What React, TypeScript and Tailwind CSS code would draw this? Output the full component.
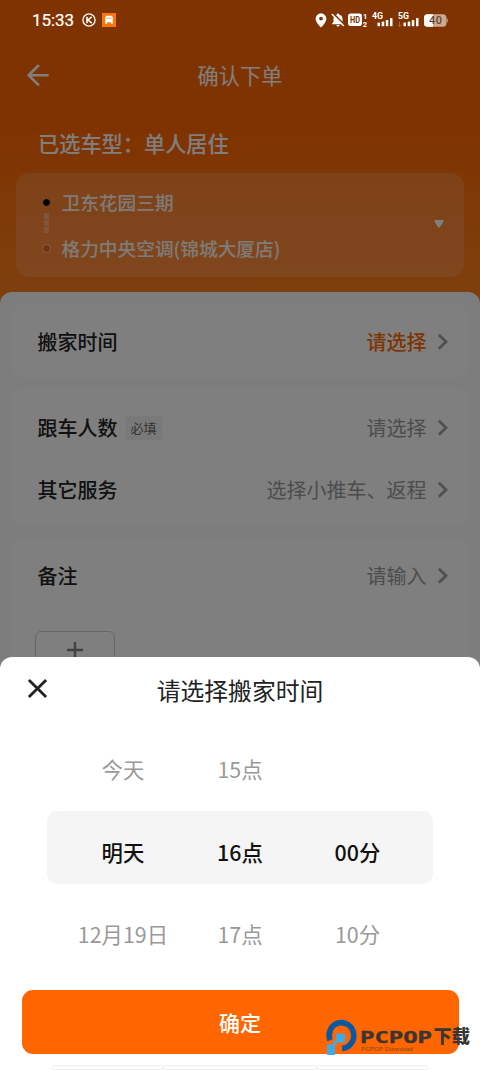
import type { ReactNode } from "react";

const days = ["今天", "明天", "12月19日"];
const hours = ["15点", "16点", "17点"];
const minutes = ["", "00分", "10分"];

function Chevron() {
  return (
    <svg width="12" height="18" viewBox="0 0 12 18" fill="none" className="text-[#a0a0a0]">
      <path d="M1.8 1.8 9 8.8 1.8 15.8" stroke="currentColor" strokeWidth="2.8" />
    </svg>
  );
}

function Signal({ label, dim }: { label: string; dim?: boolean }) {
  return (
    <svg width="22" height="20" viewBox="0 -4 22 20" fill="white" className="-mt-1 font-['Roboto']">
      <text x="0" y="6.6" fontSize="8.5" fontWeight="700" textLength="11" lengthAdjust="spacingAndGlyphs">
        {label}
      </text>
      {dim && <path d="M1.5 9.5v5M0 12.5l1.5 2 1.5-2" stroke="#a96a3e" fill="none" />}
      <rect x="5.5" y="10.6" width="2.5" height="3.6" />
      <rect x="9.7" y="9.6" width="2.5" height="4.6" />
      <rect x="13.8" y="8.1" width="2.5" height="6.1" />
      <rect x="18" y="6.1" width="2.5" height="8.1" />
    </svg>
  );
}

function StatusBar() {
  return (
    <div className="relative z-20 flex h-10 items-center justify-between pl-8 pr-[32px] text-white">
      <div className="flex items-center">
        <span className="w-[42px] font-['Roboto'] text-[17px] leading-5 tracking-[-0.1px] [-webkit-text-stroke:0.2px_white]">15:33</span>
        <svg width="14" height="14" viewBox="0 0 14 14" fill="none" stroke="white" className="ml-[8px]">
          <circle cx="7" cy="7" r="6.1" strokeWidth="1.3" />
          <path d="M5 3.8v6.4M9.6 3.9 6 7l3.8 3.2" strokeWidth="1.6" />
        </svg>
        <svg width="14" height="14" viewBox="0 0 14 14" className="ml-[6px]">
          <rect width="14" height="14" fill="#f5760d" />
          <path d="M4 2.8h6l1.3 3.4H2.7zM3.3 6h7.4v5H8.9V9.3H5.1V11H3.3z" fill="white" />
          <path d="M4.2 5.2h5.6" stroke="#f5a563" />
        </svg>
      </div>
      <div className="flex items-center font-['Roboto']">
        <svg width="12" height="15" viewBox="0 0 12 15" fill="white">
          <path fillRule="evenodd" d="M6 .3A5.4 5.4 0 0 0 .6 5.7C.6 9.4 6 14.5 6 14.5s5.4-5.1 5.4-8.8A5.4 5.4 0 0 0 6 .3zm0 3.4a1.9 1.9 0 1 1 0 3.8 1.9 1.9 0 0 1 0-3.8z" />
        </svg>
        <svg width="14" height="14" viewBox="0 0 14 14" className="ml-[4px]">
          <path d="M7 .5c.8 0 1.2.5 1.2 1.2C10.4 2.2 11.5 4 11.5 6v2.8l1.3 1.6v.8H1.2v-.8l1.3-1.6V6c0-2 1.1-3.8 3.3-4.3C5.8 1 6.2.5 7 .5zM5.5 12h3a1.5 1.5 0 0 1-3 0z" fill="white" />
          <path d="m1.9.1 12 12" stroke="#803300" strokeWidth="1.6" />
          <path d="m.8.9 12 12" stroke="white" strokeWidth="1.4" />
        </svg>
        <svg width="20" height="20" viewBox="0 -2 20 20" className="ml-[3px]">
          <rect x="0" y="1.5" width="14" height="12.5" rx="2.8" fill="white" />
          <text x="2" y="10.9" fontSize="8.5" fontWeight="700" fill="#803300" textLength="10" lengthAdjust="spacingAndGlyphs">HD</text>
          <text x="15" y="7" fontSize="7.5" fontWeight="700" fill="white">1</text>
          <text x="14.7" y="15" fontSize="7.5" fontWeight="700" fill="white">2</text>
        </svg>
        <div className="ml-1">
          <Signal label="4G" />
        </div>
        <div className="ml-[4px]">
          <Signal label="5G" dim />
        </div>
        <svg width="24" height="13" viewBox="0 0 24 13" className="ml-[4px]">
          <rect x="0" y="0.3" width="22.4" height="12.4" rx="3.5" fill="#cda990" />
          <path d="M3.5.3H9v12.4H3.5A3.5 3.5 0 0 1 0 9.2V3.8A3.5 3.5 0 0 1 3.5.3z" fill="white" />
          <path d="M22.6 4c1.6.8 1.6 4.2 0 5z" fill="#cda990" />
          <text x="5" y="10.3" fontSize="10.8" fontWeight="500" fill="#5a4636" textLength="13">40</text>
        </svg>
      </div>
    </div>
  );
}

function Row({ label, value, tag, active }: { label: string; value: string; tag?: string; active?: boolean }) {
  return (
    <div className="flex items-center justify-between pl-[26.5px] pr-[20.5px]">
      <div className="flex items-center">
        <span className="text-[20px] font-medium leading-7 text-[#222]">{label}</span>
        {tag && (
          <span className="ml-[8px] flex h-6 w-9 items-center justify-center rounded bg-[#f2f2f2] text-[13px] text-[#666]">{tag}</span>
        )}
      </div>
      <div className="flex items-center gap-[10px]">
        <span className={active ? "text-[20px] font-medium leading-7 text-[#ff6600]" : "text-[20px] leading-7 text-[#999]"}>{value}</span>
        <Chevron />
      </div>
    </div>
  );
}

function Card({ className, children }: { className: string; children: ReactNode }) {
  return <div className={`mx-[11px] rounded-[14px] bg-white ${className}`}>{children}</div>;
}

function PickerColumn({ items, className }: { items: string[]; className: string }) {
  return (
    <div className={`flex flex-col items-center pt-[2px] ${className}`}>
      {items.map((item, i) => (
        <span
          key={i}
          className={`flex h-[82.5px] items-center text-[21.4px] ${i === 1 ? "font-medium text-[#111]" : "text-[#999]"}`}
        >
          {item}
        </span>
      ))}
    </div>
  );
}

function Watermark() {
  return (
    <svg width="150" height="40" viewBox="0 0 150 40" className="absolute left-[324px] top-[1018px]">
      <path d="M6 22.2A12.3 12.9 0 1 1 18 30.4" fill="none" stroke="#0b57a0" strokeWidth="5.6" />
      <rect x="12" y="15.5" width="9" height="9" fill="#3fa9ea" />
      <path d="M3 26.5h6V23h3.5v3.5H11V37H3z" fill="#3fa9ea" />
      <text x="36" y="25.4" fontSize="16.5" fontWeight="700" fill="#3b3531" stroke="#3b3531" strokeWidth=".4" textLength="72" lengthAdjust="spacingAndGlyphs" className="font-['DejaVu_Sans_Mono']">
        PCPOP
      </text>
      <text x="109.5" y="25.4" fontSize="18" fontWeight="900" fill="#3b3531" textLength="36.5" lengthAdjust="spacingAndGlyphs">
        下载
      </text>
      <text x="37" y="32.6" fontSize="5" fill="#7a4a25" textLength="52" lengthAdjust="spacingAndGlyphs" className="font-['Liberation_Sans']">
        PCPOP Download
      </text>
    </svg>
  );
}

export default function App() {
  return (
    <div className="relative h-[1070px] w-[480px] overflow-hidden bg-[#f8f8f8] font-['Noto_Sans_CJK_SC',sans-serif]">
      <div className="h-[310px] bg-linear-to-b from-[#ff6600] from-40% to-[#ff8020]">
        <StatusBar />
        <div className="flex h-[69px] items-center px-[26px]">
          <svg width="24" height="24" viewBox="0 0 24 24" fill="none" stroke="white" strokeWidth="2.6" strokeLinecap="round" strokeLinejoin="round">
            <path d="M12.2 2.8 2.6 12.2l9.6 9.4M2.8 12.2h18.8" />
          </svg>
          <h1 className="flex-1 pr-[24px] text-center text-[21.2px] leading-7 text-white">确认下单</h1>
        </div>
        <p className="mt-[19px] pl-[38px] text-[21.2px] font-medium leading-[30px] text-white">已选车型：单人居住</p>
        <div className="mx-4 mt-[15px] flex h-[104px] items-center rounded-[14px] bg-white/15 pl-[26px] pr-[20px]">
          <div className="flex h-[60px] w-[9px] flex-col items-center">
            <span className="mt-[3px] size-[9px] rounded-full border border-[#ff9d5c] bg-black" />
            <div className="mt-[6px] flex flex-col items-center gap-px">
              <span className="h-[6px] w-[5px] bg-white/30" />
              <span className="h-[6px] w-[5px] bg-white/30" />
              <span className="h-[6px] w-[5px] bg-white/30" />
            </div>
            <span className="mt-[11px] size-[9px] rounded-full border-[1.5px] border-[#ffc8a4] bg-[#e8641a]" />
          </div>
          <div className="ml-[10.5px] flex flex-1 flex-col gap-[18px] text-[18.7px] font-medium leading-7 text-white/95">
            <span>卫东花园三期</span>
            <span>格力中央空调(锦城大厦店)</span>
          </div>
          <svg width="10" height="10" viewBox="0 0 10 10" fill="white">
            <path d="M1.2 0h7.6q1.2.3.6 1.7L6 7q-1 1.4-2 0L.6 1.7Q0 .3 1.2 0z" />
          </svg>
        </div>
      </div>

      <div className="relative -mt-[18px] h-[780px] rounded-t-xl bg-[#fbfbfb] pt-[12px]">
        <Card className="h-[74px] pt-[24px]">
          <Row label="搬家时间" value="请选择" active />
        </Card>
        <Card className="mt-[10px] flex h-[138px] flex-col gap-[34px] pt-[26px]">
          <Row label="跟车人数" value="请选择" tag="必填" />
          <Row label="其它服务" value="选择小推车、返程" />
        </Card>
        <Card className="mt-[12px] h-[300px] pt-[24px]">
          <Row label="备注" value="请输入" />
          <div className="ml-[27px] mr-[20px] mt-[22px] border-t border-[#fafafa]" />
          <div className="ml-[24px] mt-[18px] flex h-[80px] w-[80px] justify-center rounded-md border border-[#ccc] pt-[10px]">
            <svg width="16" height="16" viewBox="0 0 16 16" stroke="#808080" strokeWidth="2.4">
              <path d="M8 0v16M0 8h16" />
            </svg>
          </div>
        </Card>
      </div>

      <div className="absolute inset-0 z-10 bg-black/50" />

      <div className="absolute inset-x-0 bottom-0 z-30 flex h-[413px] flex-col rounded-t-xl bg-white">
        <div className="flex h-[65px] items-center px-[27px]">
          <svg width="21" height="21" viewBox="0 0 21 21" stroke="#222" strokeWidth="2.8" className="mb-[3px]">
            <path d="m1.9 1.9 17.2 17.2M19.1 1.9 1.9 19.1" />
          </svg>
          <h2 className="flex-1 pr-[21px] text-center text-[23.8px] leading-8 text-[#222]">请选择搬家时间</h2>
        </div>
        <div className="mt-[4px] grid h-[249px] grid-cols-1">
          <div className="col-start-1 row-start-1 mx-[47px] mb-[6px] h-[73px] self-center rounded-[10px] bg-[#f5f5f5]" />
          <div className="relative col-start-1 row-start-1 flex pl-[64.5px]">
            <PickerColumn items={days} className="w-[117px]" />
            <PickerColumn items={hours} className="w-[117px]" />
            <PickerColumn items={minutes} className="w-[118px]" />
          </div>
        </div>
        <button className="mx-[21.5px] mt-[15px] h-[64px] shrink-0 rounded-[11px] bg-[#ff6600] pt-[1px] text-[21px] font-medium text-white">确定</button>
        <div className="ml-[52px] mt-[11px] flex">
          <span className="h-[5px] w-[111px] rounded-sm border border-[#eee]" />
          <span className="h-[5px] w-[154px] rounded-sm border border-[#eee]" />
          <span className="h-[5px] w-[111px] rounded-sm border border-[#eee]" />
        </div>
      </div>

      <div className="absolute inset-0 z-40">
        <Watermark />
      </div>
    </div>
  );
}
